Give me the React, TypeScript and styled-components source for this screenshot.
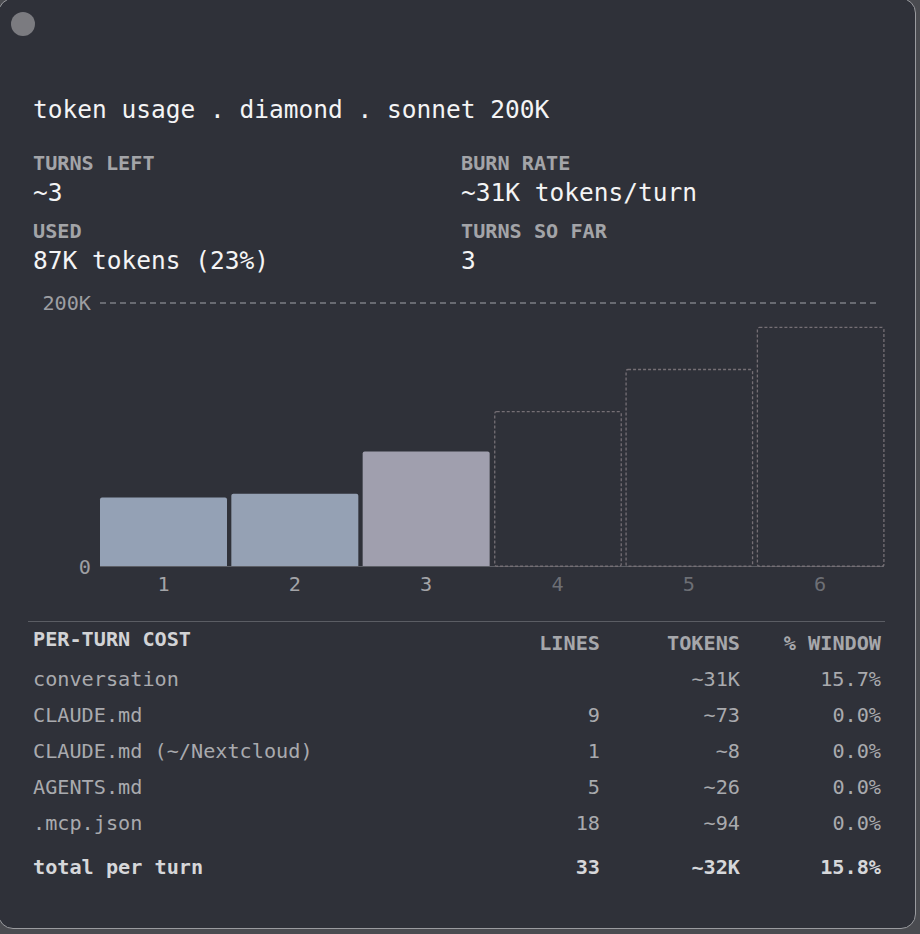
import React from "react";
import styled, { createGlobalStyle } from "styled-components";

const Global = createGlobalStyle`
  html, body { margin: 0; padding: 0; background: #4a4b50; overflow: hidden; }
  body { width: 920px; height: 934px; }
  * { box-sizing: border-box; }
`;

const MONO = `"DejaVu Sans Mono", "Liberation Mono", monospace`;

const Window = styled.div`
  margin: -2px 0 0 -2px;
  width: 918px;
  height: 931px;
  background: #2f3139;
  border: 1px solid #9a9b9f;
  border-radius: 15px;
  overflow: hidden;
  padding: 0 34px 0 34px;
  font-family: ${MONO};
  color: #f2f2f3;
`;

const TrafficLight = styled.div`
  width: 24px;
  height: 24px;
  border-radius: 50%;
  background: #7b7b80;
  margin: 13px 0 0 -22px;
`;

const Title = styled.h1`
  margin: 59px 0 0 0;
  font-size: 24.5px;
  line-height: 30px;
  font-weight: 400;
  color: #f4f4f5;
  white-space: pre;
`;

const Stats = styled.div`
  display: grid;
  grid-template-columns: 428px 1fr;
  row-gap: 10px;
  margin-top: 25px;
`;

const Stat = styled.div`
  display: flex;
  flex-direction: column;
  gap: 2px;
`;

const StatLabel = styled.div`
  font-size: 20.2px;
  line-height: 26px;
  font-weight: 700;
  color: #a3a4a8;
`;

const StatValue = styled.div`
  font-size: 24.5px;
  line-height: 30px;
  color: #f4f4f5;
  white-space: pre;
`;

const ChartSvg = styled.svg`
  display: block;
  margin: 10px 0 0 -5px;
  overflow: visible;
  font-family: ${MONO};
`;

const CostTable = styled.div`
  margin: 25px -4px 0 -5px;
  padding: 0 4px 0 5px;
  border-top: 1px solid #5b5d64;
  display: grid;
  grid-template-columns: 1fr 110px 140px 141px;
  font-size: 20.2px;
`;

const HeadCell = styled.div<{ $main?: boolean }>`
  height: 34px;
  line-height: 26px;
  display: flex;
  align-items: ${(p) => (p.$main ? "flex-start" : "flex-end")};
  justify-content: ${(p) => (p.$main ? "flex-start" : "flex-end")};
  padding-top: ${(p) => (p.$main ? "4px" : "0")};
  font-weight: 700;
  color: ${(p) => (p.$main ? "#d2d3d6" : "#a6a7ab")};
  margin-bottom: 5px;
`;

const Cell = styled.div<{ $num?: boolean; $total?: boolean }>`
  height: 36px;
  line-height: 36px;
  text-align: ${(p) => (p.$num ? "right" : "left")};
  color: ${(p) => (p.$total ? "#d6d7da" : "#a9aaae")};
  font-weight: ${(p) => (p.$total ? 700 : 400)};
  margin-top: ${(p) => (p.$total ? "8px" : "0")};
  white-space: pre;
`;

const rows = [
  { name: "conversation", lines: "", tokens: "~31K", pct: "15.7%" },
  { name: "CLAUDE.md", lines: "9", tokens: "~73", pct: "0.0%" },
  { name: "CLAUDE.md (~/Nextcloud)", lines: "1", tokens: "~8", pct: "0.0%" },
  { name: "AGENTS.md", lines: "5", tokens: "~26", pct: "0.0%" },
  { name: ".mcp.json", lines: "18", tokens: "~94", pct: "0.0%" },
];

const turns = [
  { v: 52, actual: true, color: "#94a1b5" },
  { v: 55, actual: true, color: "#95a1b4" },
  { v: 87, actual: true, color: "#a09fae" },
  { v: 118, actual: false, color: "" },
  { v: 150, actual: false, color: "" },
  { v: 182, actual: false, color: "" },
];

function Chart() {
  const top = 17;
  const base = 280;
  const plotH = base - top;
  const x0 = 72;
  const slot = 131.33;
  const bw = 127;
  return (
    <ChartSvg width={860} height={310} viewBox="0 0 860 310">
      <text x={63} y={top} textAnchor="end" dominantBaseline="central" fontSize={20.2} fill="#9d9ea2">
        200K
      </text>
      <line x1={72} y1={top} x2={852} y2={top} stroke="#7c7e84" strokeWidth={1.6} strokeDasharray="6 4" />
      <text x={63} y={base + 1} textAnchor="end" dominantBaseline="central" fontSize={20.2} fill="#9d9ea2">
        0
      </text>
      <line x1={72} y1={base + 0.5} x2={856} y2={base + 0.5} stroke="#5c5e65" strokeWidth={1} />
      {turns.map((t, i) => {
        const h = (t.v / 200) * plotH;
        const x = x0 + i * slot;
        const y = base - h;
        const cx = x + bw / 2;
        return (
          <g key={i}>
            {t.actual ? (
              <path
                d={`M${x} ${base} V${y + 2} Q${x} ${y} ${x + 2} ${y} H${x + bw - 2} Q${x + bw} ${y} ${x + bw} ${y + 2} V${base} Z`}
                fill={t.color}
              />
            ) : (
              <rect
                x={x + 0.75}
                y={y + 0.75}
                width={bw - 0.5}
                height={h - 0.5}
                rx={2}
                fill="none"
                stroke="#756f75"
                strokeWidth={1.3}
                strokeDasharray="3 2"
              />
            )}
            <text
              x={cx}
              y={base + 18}
              textAnchor="middle"
              dominantBaseline="central"
              fontSize={20.2}
              fill={t.actual ? "#a3a4a8" : "#6d6f75"}
            >
              {i + 1}
            </text>
          </g>
        );
      })}
    </ChartSvg>
  );
}

export default function App() {
  return (
    <>
      <Global />
      <Window>
        <TrafficLight />
        <Title>token usage . diamond . sonnet 200K</Title>
        <Stats>
          <Stat>
            <StatLabel>TURNS LEFT</StatLabel>
            <StatValue>~3</StatValue>
          </Stat>
          <Stat>
            <StatLabel>BURN RATE</StatLabel>
            <StatValue>~31K tokens/turn</StatValue>
          </Stat>
          <Stat>
            <StatLabel>USED</StatLabel>
            <StatValue>87K tokens (23%)</StatValue>
          </Stat>
          <Stat>
            <StatLabel>TURNS SO FAR</StatLabel>
            <StatValue>3</StatValue>
          </Stat>
        </Stats>
        <Chart />
        <CostTable>
          <HeadCell $main>PER-TURN COST</HeadCell>
          <HeadCell>LINES</HeadCell>
          <HeadCell>TOKENS</HeadCell>
          <HeadCell>% WINDOW</HeadCell>
          {rows.map((r) => (
            <React.Fragment key={r.name}>
              <Cell>{r.name}</Cell>
              <Cell $num>{r.lines}</Cell>
              <Cell $num>{r.tokens}</Cell>
              <Cell $num>{r.pct}</Cell>
            </React.Fragment>
          ))}
          <Cell $total>total per turn</Cell>
          <Cell $total $num>33</Cell>
          <Cell $total $num>~32K</Cell>
          <Cell $total $num>15.8%</Cell>
        </CostTable>
      </Window>
    </>
  );
}
